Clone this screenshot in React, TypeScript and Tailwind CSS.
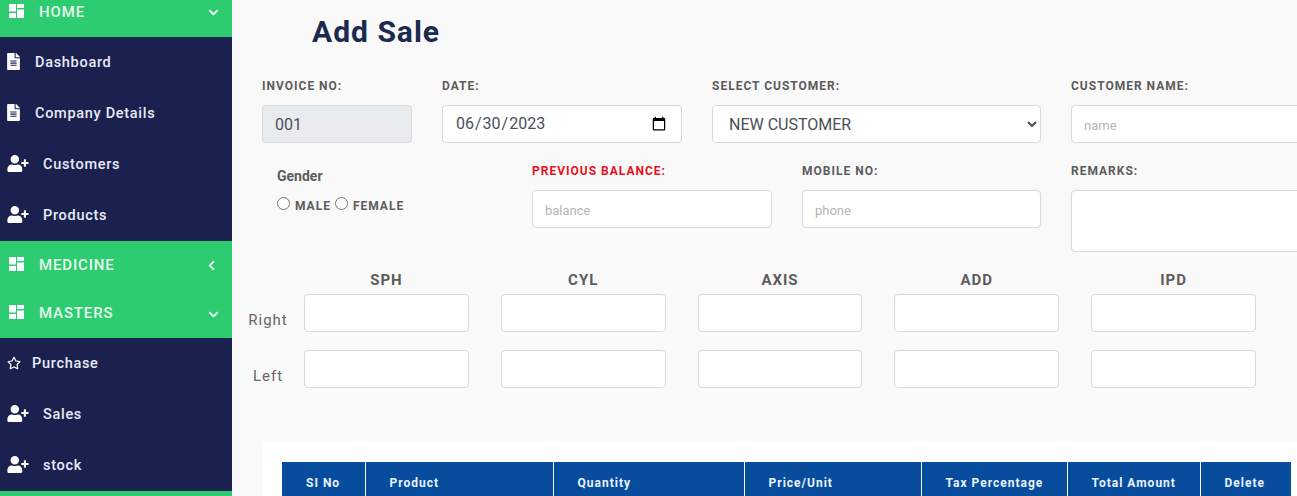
import { FaChevronDown, FaChevronLeft, FaFileAlt, FaRegStar, FaUserPlus } from "react-icons/fa";

function GridIcon() {
  return (
    <svg width="15" height="14" viewBox="0 0 15 14" fill="currentColor" className="absolute left-[9px] top-1/2 mt-[-9px] text-white">
      <rect x="0" y="0" width="7" height="7.5" />
      <rect x="8" y="0" width="7" height="4" />
      <rect x="0" y="9" width="7" height="5" />
      <rect x="8" y="5.5" width="7" height="8.5" />
    </svg>
  );
}

function GreenRow({ label, open, className }: { label: string; open: boolean; className: string }) {
  return (
    <div className={`relative flex items-center justify-between pl-[39px] pr-[13px] text-[15px] font-medium tracking-[0.85px] text-[#e6f9ee] ${className}`}>
      <GridIcon />
      <span className="-mt-[1px]">{label}</span>
      {open ? <FaChevronDown className="text-[11px] text-white" /> : <FaChevronLeft className="mr-[2px] text-[11px] text-white" />}
    </div>
  );
}

function NavItem({ label, icon }: { label: string; icon: "file" | "user" | "star" }) {
  return (
    <div className="flex h-[51px] items-center pl-[7px] text-[14.5px] font-medium tracking-[0.7px] text-[#e8eaf6]">
      {icon === "file" && <FaFileAlt className="mr-[15px] -mt-[2px] h-[17px] w-[13px] text-white" />}
      {icon === "user" && <FaUserPlus className="mr-[14px] -mt-[2px] w-[22px] text-[17px] text-white" />}
      {icon === "star" && <FaRegStar className="mr-[11px] -mt-[2px] text-[14px] text-white" />}
      {label}
    </div>
  );
}

function Sidebar() {
  return (
    <aside className="h-[496px] w-[232px] shrink-0 overflow-hidden bg-[#1b214f]">
      <GreenRow label="HOME" open className="-mt-[12px] h-[49px] bg-[#2ecc71]" />
      <NavItem label="Dashboard" icon="file" />
      <NavItem label="Company Details" icon="file" />
      <NavItem label="Customers" icon="user" />
      <NavItem label="Products" icon="user" />
      <GreenRow label="MEDICINE" open={false} className="h-[49px] bg-[#2ecc71]" />
      <GreenRow label="MASTERS" open className="h-[48px] bg-[#2ecc71]" />
      <NavItem label="Purchase" icon="star" />
      <NavItem label="Sales" icon="user" />
      <NavItem label="stock" icon="user" />
      <div className="h-[10px] bg-[#2ecc71]" />
    </aside>
  );
}

const labelCls = "mb-[10px] block h-[18px] text-[12px] leading-[18px] font-bold tracking-[1px] text-[#5c5c5c]";
const inputCls =
  "block h-[38px] w-full rounded-[4px] border border-[#d9d9d9] bg-white px-3 text-[13px] text-[#495057] outline-none placeholder:text-[#b5b5b5]";

function Field({ label, placeholder, width, red }: { label: string; placeholder: string; width: string; red?: boolean }) {
  return (
    <div className={width}>
      <label className={`${labelCls} ${red ? "text-[#e8101c]" : ""}`}>{label}</label>
      <input className={`${inputCls} pt-[2px]`} placeholder={placeholder} />
    </div>
  );
}

const eyeCols = ["SPH", "CYL", "AXIS", "ADD", "IPD"];
const tableCols = [
  { name: "SI No", cls: "w-[83px]" },
  { name: "Product", cls: "w-[188px]" },
  { name: "Quantity", cls: "w-[191px]" },
  { name: "Price/Unit", cls: "w-[177px]" },
  { name: "Tax Percentage", cls: "w-[146px]" },
  { name: "Total Amount", cls: "w-[133px]" },
  { name: "Delete", cls: "w-[91px]" },
];

function EyeRow({ label }: { label: string }) {
  return (
    <div className="flex items-center">
      <div className="w-[40px] pt-[14px] text-center text-[15px] tracking-[1px] text-[#666]">{label}</div>
      <div className="ml-[16px] grid w-[952px] grid-cols-5 gap-x-[32px]">
        {eyeCols.map((c) => (
          <input key={c} className={inputCls} />
        ))}
      </div>
    </div>
  );
}

export default function App() {
  return (
    <div className="flex h-[496px] w-[1297px] overflow-hidden bg-[#f9f9f9] font-['Roboto',sans-serif]">
      <Sidebar />
      <main className="min-w-0 flex-1 pl-[30px]">
        <h1 className="ml-[50px] pt-[12px] text-[30px] leading-[40px] font-bold tracking-[1px] text-[#1b2a4e]">Add Sale</h1>

        <div className="mt-[25px] flex w-[1100px] gap-[30px]">
          <div className="w-[150px]">
            <label className={labelCls}>INVOICE NO:</label>
            <input readOnly value="001" className={`${inputCls} !bg-[#e9ecef] text-[16px]`} />
          </div>
          <div className="w-[240px]">
            <label className={labelCls}>DATE:</label>
            <input type="date" defaultValue="2023-06-30" className={`${inputCls} text-[16px]`} />
          </div>
          <div className="w-[329px]">
            <label className={labelCls}>SELECT CUSTOMER:</label>
            <select className={`${inputCls} text-[16px]`}>
              <option>NEW CUSTOMER</option>
            </select>
          </div>
          <Field label="CUSTOMER NAME:" placeholder="name" width="w-[240px]" />
        </div>

        <div className="mt-[19px] flex w-[1100px] gap-[30px]">
          <div className="w-[240px] pl-[15px] pt-[5px] text-[#5c5c5c]">
            <div className="mb-[12px] text-[14px] leading-[18px] font-bold">Gender</div>
            <div className="flex items-center text-[12px] font-bold tracking-[1px]">
              <input type="radio" name="gender" className="mr-[5px] ml-0 -mt-[5px] size-[13px]" />
              <span className="mr-[4px]">MALE</span>
              <input type="radio" name="gender" className="mr-[5px] ml-0 -mt-[5px] size-[13px]" />
              <span>FEMALE</span>
            </div>
          </div>
          <Field label="PREVIOUS BALANCE:" placeholder="balance" width="w-[240px]" red />
          <Field label="MOBILE NO:" placeholder="phone" width="w-[239px]" />
          <div className="w-[240px]">
            <label className={labelCls}>REMARKS:</label>
            <textarea className={`${inputCls} !h-[62px] resize-none`} />
          </div>
        </div>

        <div className="-ml-[14px] mt-[17px]">
          <div className="ml-[56px] grid h-[20px] w-[952px] grid-cols-5 items-center gap-x-[32px]">
            {eyeCols.map((c) => (
              <div key={c} className="text-center text-[15px] font-bold tracking-[1px] text-[#5c5c5c]">{c}</div>
            ))}
          </div>
          <div className="mt-[5px] flex flex-col gap-y-[18px]">
            <EyeRow label="Right" />
            <EyeRow label="Left" />
          </div>
        </div>

        <div className="mt-[53px] h-[200px] bg-white pl-[20px] pt-[21px]">
          <table className="table-fixed border-collapse bg-[#084c9e] text-left text-[12px] font-bold tracking-[1px] text-[#e8f4ff]">
            <thead>
              <tr>
                {tableCols.map((c) => (
                  <th key={c.name} className={`${c.cls} h-[40px] border-x border-white pl-[24px] pt-[2px] font-bold first:border-l-0`}>{c.name}</th>
                ))}
              </tr>
            </thead>
          </table>
        </div>
      </main>
    </div>
  );
}
